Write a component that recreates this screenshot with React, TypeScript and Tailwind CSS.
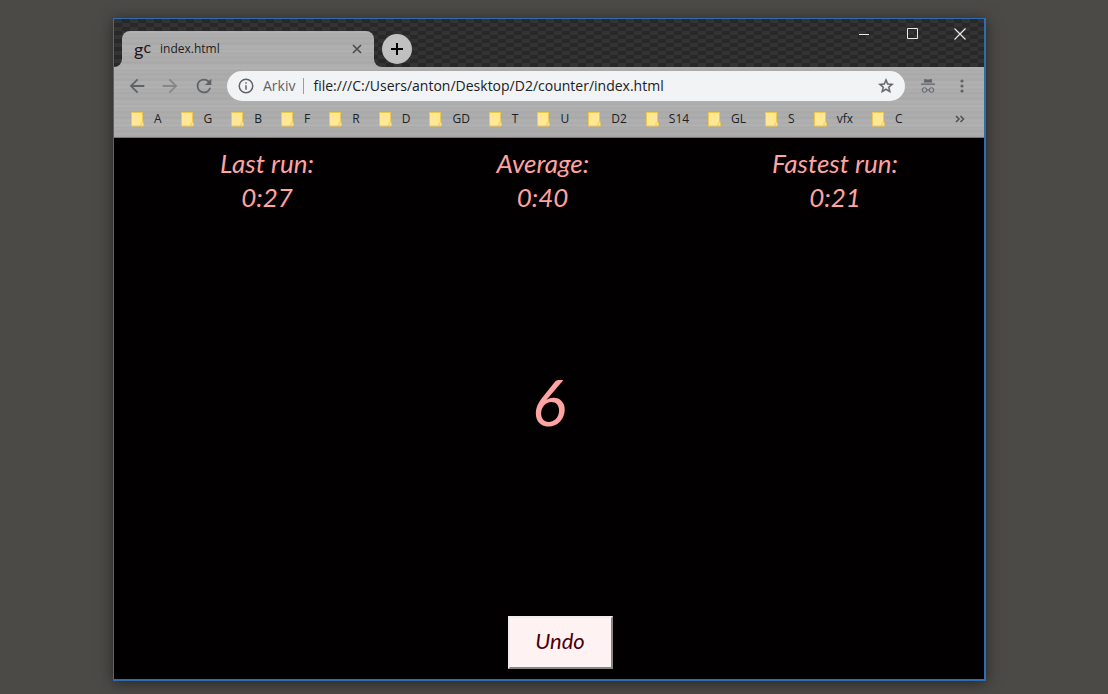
import React from "react";

const bookmarks = ["A", "G", "B", "F", "R", "D", "GD", "T", "U", "D2", "S14", "GL", "S", "vfx", "C"];

const stats = [
  { label: "Last run:", value: "0:27", width: "w-[110px]" },
  { label: "Average:", value: "0:40", width: "w-[92px]" },
  { label: "Fastest run:", value: "0:21", width: "w-[144px]" },
];

const metal =
  "bg-[#acacac] bg-[repeating-linear-gradient(180deg,#b0b0b0_0px,#b2b2b2_2px,#a9a9a9_3px,#afafaf_5px,#a8a8a8_7px,#aeaeae_10px,#a7a7a7_13px,#b1b1b1_15px,#ababab_19px)]";

const carbon =
  "bg-[#2b2b2b] bg-[conic-gradient(#282828_25%,#333_0_50%,#282828_0_75%,#333_0)] bg-[length:16px_8px]";

function Folder() {
  return (
    <svg width="13" height="16" viewBox="0 0 13 16" aria-hidden="true">
      <path d="M.5 1.500h11v10h1v3.500H.5z" fill="#ffe794" />
      <path d="M.5 1.500h11v9l1 1.500v3H.5z" fill="none" stroke="#eec84e" />
      <path d="M10 15v-2.500l1.500-1.500" fill="none" stroke="#eec84e" />
    </svg>
  );
}

function TabFoot({ flip = false }: { flip?: boolean }) {
  return (
    <svg width="8" height="8" viewBox="0 0 8 8" className={flip ? "-scale-x-100" : ""} aria-hidden="true">
      <path d="M8 0v8H0a8 8 0 0 0 8-8z" fill="#acacac" />
    </svg>
  );
}

function TitleBar() {
  return (
    <header className={`flex h-12 items-end justify-between ${carbon}`}>
      <div className="flex items-end">
        <TabFoot />
        <div className={`flex h-9 w-[252px] items-center rounded-t-lg pl-3 pr-[9px] ${metal}`}>
          <span className="flex w-[26px] items-start font-['Lato',sans-serif] leading-5 text-[#241418]" aria-hidden="true">
            <span className="text-lg leading-5">g</span>
            <span className="text-base leading-4">c</span>
          </span>
          <span className="grow text-xs text-[#202020]">index.html</span>
          <button aria-label="Close tab" className="flex size-4 items-center justify-center text-[#4c4c4e]">
            <svg width="10" height="10" viewBox="0 0 10 10" stroke="currentColor" strokeWidth="1.7">
              <path d="M1 1l8 8M9 1L1 9" />
            </svg>
          </button>
        </div>
        <TabFoot flip />
        <button aria-label="New tab" className="mb-[3px] flex size-[30px] items-center justify-center rounded-full bg-[#c0c0c0] text-black">
          <svg width="14" height="14" viewBox="0 0 14 14" stroke="currentColor" strokeWidth="2">
            <path d="M7 1v12M1 7h12" />
          </svg>
        </button>
      </div>
      <div className="flex h-[30px] self-start text-[#e8e8e8]">
        <button aria-label="Minimize" className="flex w-12 items-center justify-center">
          <svg width="12" height="12" viewBox="0 0 12 12" stroke="currentColor"><path d="M1 6.500h10" /></svg>
        </button>
        <button aria-label="Maximize" className="flex w-12 items-center justify-center">
          <svg width="12" height="12" viewBox="0 0 12 12" fill="none" stroke="currentColor"><path d="M1.500.5h10v10h-10z" /></svg>
        </button>
        <button aria-label="Close" className="flex w-12 items-center justify-center">
          <svg width="12" height="12" viewBox="0 0 12 12" stroke="currentColor" strokeWidth="1.2"><path d="M.5.5l11 11M11.500.5l-11 11" /></svg>
        </button>
      </div>
    </header>
  );
}

function Toolbar() {
  return (
    <div className="flex h-[37px] items-center pl-3 pr-[14px] text-[#5f6368]">
      <button aria-label="Back" className="mr-[11px]">
        <svg width="22" height="22" viewBox="0 0 24 24" fill="currentColor"><path d="M20 11H7.83l5.59-5.59L12 4l-8 8 8 8 1.41-1.41L7.83 13H20v-2z" /></svg>
      </button>
      <button aria-label="Forward" className="mr-3 text-[#85878a]">
        <svg width="22" height="22" viewBox="0 0 24 24" fill="currentColor"><path d="M12 4l-1.410 1.410L16.170 11H4v2h12.170l-5.580 5.590L12 20l8-8z" /></svg>
      </button>
      <button aria-label="Reload" className="mr-3">
        <svg width="22" height="22" viewBox="0 0 24 24" fill="currentColor"><path d="M17.650 6.350A7.950 7.950 0 0 0 12 4a8 8 0 1 0 7.730 10h-2.080A6 6 0 1 1 12 6c1.660 0 3.140.690 4.220 1.780L13 11h7V4l-2.350 2.350z" /></svg>
      </button>
      <div className="flex h-[30px] min-w-0 grow items-center rounded-full bg-[#f1f3f4] px-[10px]">
        <svg width="18" height="18" viewBox="0 0 24 24" fill="currentColor" aria-hidden="true"><path d="M11 7h2v2h-2zm0 4h2v6h-2zm1-9a10 10 0 1 0 0 20 10 10 0 0 0 0-20zm0 18a8 8 0 1 1 0-16 8 8 0 0 1 0 16z" /></svg>
        <label htmlFor="address" className="ml-2 border-r border-[#9a9c9f] pr-2 text-sm leading-4">Arkiv</label>
        <input id="address" defaultValue="file:///C:/Users/anton/Desktop/D2/counter/index.html" className="ml-[9px] min-w-0 grow bg-transparent text-sm text-[#202124] outline-none" />
        <button aria-label="Bookmark this page">
          <svg width="18" height="18" viewBox="0 0 24 24" fill="currentColor" stroke="currentColor" strokeWidth=".5"><path d="M22 9.240l-7.190-.620L12 2 9.190 8.630 2 9.240l5.460 4.730L5.820 21 12 17.270 18.180 21l-1.630-7.030L22 9.240zM12 15.400l-3.760 2.270 1-4.280-3.320-2.880 4.380-.380L12 6.100l1.710 4.040 4.380.380-3.320 2.880 1 4.280L12 15.400z" /></svg>
        </button>
      </div>
      <button aria-label="Incognito" className="ml-[15px]">
        <svg width="16" height="16" viewBox="0 0 16 16" fill="currentColor">
          <path d="M4.500.8l2 .6h3l2-.6.7 3.700H3.800zM1 5.500h14v1.300H1z" />
          <circle cx="4.500" cy="12" r="2.300" fill="none" stroke="currentColor" />
          <circle cx="11.500" cy="12" r="2.300" fill="none" stroke="currentColor" />
          <path d="M7 11.400h2v1H7z" />
        </svg>
      </button>
      <button aria-label="Menu" className="ml-[18px]">
        <svg width="16" height="16" viewBox="0 0 16 16" fill="currentColor">
          <circle cx="8" cy="3" r="1.600" /><circle cx="8" cy="8" r="1.600" /><circle cx="8" cy="13" r="1.600" />
        </svg>
      </button>
    </div>
  );
}

function BookmarksBar() {
  return (
    <nav className="flex h-[34px] items-center border-b border-[#777] pb-[3px] pl-[17px] pr-[19px] text-xs text-[#202124]">
      <ul className="flex grow gap-[19px]">
        {bookmarks.map((name) => (
          <li key={name}>
            <a href="#" className="flex items-center gap-[10px]"><Folder />{name}</a>
          </li>
        ))}
      </ul>
      <button aria-label="More bookmarks" className="text-[#4d4f52]">
        <svg width="10" height="8" viewBox="0 0 10 8" fill="none" stroke="currentColor" strokeWidth="1.5"><path d="M1 1l3 3-3 3M5.500 1l3 3-3 3" /></svg>
      </button>
    </nav>
  );
}

export default function App() {
  return (
    <div className="flex min-h-screen bg-[#4b4a47] pb-[13px] pl-[113px] pr-[122px] pt-[18px] font-['Open_Sans','Noto_Sans',sans-serif]">
      <div className="flex min-w-0 grow flex-col border border-b-2 border-r-2 border-[#2f6db0] bg-black shadow-[0_2px_14px_rgba(0,0,0,0.5)]">
        <TitleBar />
        <div className={metal}>
          <Toolbar />
          <BookmarksBar />
        </div>
        <main className="flex grow flex-col items-center bg-[#020000] pb-[10px] pt-2 font-['Lato',sans-serif] italic text-[#ffa3a3]">
          <dl className="flex w-full justify-between pl-[98px] pr-[77px] text-center text-[26px] leading-[34px]">
            {stats.map((s) => (
              <div key={s.label} className={s.width}>
                <dt className="whitespace-nowrap">{s.label}</dt>
                <dd>{s.value}</dd>
              </div>
            ))}
          </dl>
          <output className="flex grow items-center pb-[26px] text-[64px] leading-none">6</output>
          <button className="ml-[22px] h-[53px] w-[105px] border-2 border-[#eee] border-b-[#858585] border-r-[#858585] bg-[#fff2f2] pb-1 text-[22px] italic text-[#4a0008]">Undo</button>
        </main>
      </div>
    </div>
  );
}
